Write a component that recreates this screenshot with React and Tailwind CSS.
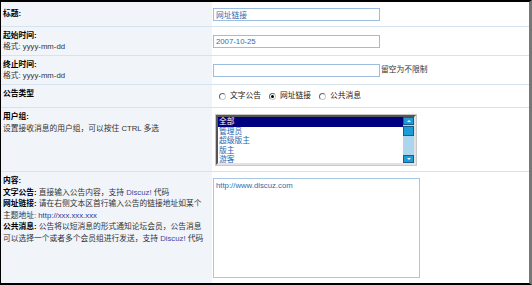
import React from 'react';

const groups = ['全部', '管理员', '超级版主', '版主', '游客'];

function Field({ value = '' }) {
  return (
    <input
      readOnly
      defaultValue={value}
      className="h-[13px] w-[167px] border border-[#9cbde0] bg-white px-[2px] text-[7.75px] leading-[11px] text-[#2e6cb4] outline-none"
    />
  );
}

function Radio({ checked, label }) {
  return (
    <span className="flex items-center">
      <span className="relative mr-[4px] h-[7px] w-[7px] rounded-full border border-t-[#666] border-l-[#666] border-r-[#c8c8c8] border-b-[#c8c8c8] bg-white">
        {checked && <span className="absolute inset-0 m-auto h-[3px] w-[3px] rounded-full bg-black" />}
      </span>
      <span className="mr-[8px]">{label}</span>
    </span>
  );
}

function ListBox() {
  return (
    <div className="flex h-[52px] w-[202px] border border-[#c9c9c9] bg-white">
      <div className="flex flex-1 border-2 border-t-[#555] border-l-[#555] border-r-[#e2e2e2] border-b-[#e2e2e2]">
        <div className="flex-1 overflow-hidden">
          {groups.map((g, i) => (
            <div
              key={g}
              className={`h-[9.6px] pl-[1px] leading-[9.6px] ${i === 0 ? 'bg-[#000080] text-white' : 'text-[#2b65ae]'}`}
            >
              {g}
            </div>
          ))}
        </div>
        {/* scrollbar */}
        <div className="flex w-[11px] flex-col bg-[#acd5ee]">
          <div className="flex h-[8px] items-center justify-center border border-[#1a5d86] bg-[#1f9bd7]">
            <span className="h-0 w-0 border-x-[2px] border-b-[2px] border-x-transparent border-b-white" />
          </div>
          <div className="mt-[1px] h-[10px] border border-[#1a5d86] bg-[#1f9bd7]" />
          <div className="flex-1" />
          <div className="flex h-[8px] items-center justify-center border border-[#1a5d86] bg-[#1f9bd7]">
            <span className="h-0 w-0 border-x-[2px] border-t-[2px] border-x-transparent border-t-white" />
          </div>
        </div>
      </div>
    </div>
  );
}

export default function App() {
  return (
    <div className="h-[285px] w-[532px] overflow-hidden bg-white font-['Liberation_Sans','Noto_Sans_CJK_SC',sans-serif] text-[7.75px] leading-[11.5px] text-black">
      <div className="flex h-full flex-col border-t-2 border-b-2 border-l border-r-[3px] border-t-black border-b-black border-l-black border-r-[#777]">
        {/* 标题 */}
        <div className="flex h-[25px] border-b border-[#d6e3ef]">
          <div className="flex w-[211px] items-center bg-[#f1f5f9] pl-[2px] font-bold">标题:</div>
          <div className="flex flex-1 items-center pl-[1px]">
            <Field value="网址链接" />
          </div>
        </div>

        {/* 起始时间 */}
        <div className="flex h-[29px] border-b border-[#d6e3ef]">
          <div className="flex w-[211px] flex-col justify-center bg-[#f1f5f9] pl-[2px]">
            <span className="font-bold">起始时间:</span>
            <span className="text-[#333]">格式: yyyy-mm-dd</span>
          </div>
          <div className="flex flex-1 items-center pl-[1px]">
            <Field value="2007-10-25" />
          </div>
        </div>

        {/* 终止时间 */}
        <div className="flex h-[29px] border-b border-[#d6e3ef]">
          <div className="flex w-[211px] flex-col justify-center bg-[#f1f5f9] pl-[2px]">
            <span className="font-bold">终止时间:</span>
            <span className="text-[#333]">格式: yyyy-mm-dd</span>
          </div>
          <div className="flex flex-1 items-center pl-[1px]">
            <Field />
            <span className="ml-[1px] text-[#333]">留空为不限制</span>
          </div>
        </div>

        {/* 公告类型 */}
        <div className="flex h-[23px] border-b border-[#d6e3ef]">
          <div className="w-[211px] bg-[#f1f5f9] pl-[2px] pt-[3px] font-bold">公告类型</div>
          <div className="flex flex-1 items-center pl-[7px] text-[#222]">
            <Radio label="文字公告" />
            <Radio label="网址链接" checked />
            <Radio label="公共消息" />
          </div>
        </div>

        {/* 用户组 */}
        <div className="flex h-[64px] border-b border-[#d6e3ef]">
          <div className="w-[211px] bg-[#f1f5f9] pl-[2px] pt-[3px]">
            <div className="font-bold">用户组:</div>
            <div className="text-[#333]">设置接收消息的用户组，可以按住 CTRL 多选</div>
          </div>
          <div className="flex-1 pl-[3px] pt-[6px]">
            <ListBox />
          </div>
        </div>

        {/* 内容 */}
        <div className="flex flex-1">
          <div className="w-[211px] bg-[#f1f5f9] pl-[2px] pt-[3px] leading-[11.6px] text-[#333]">
            <div className="font-bold text-black">内容:</div>
            <div>
              <b className="text-black">文字公告:</b> 直接输入公告内容，支持 <span className="text-[#4646a0]">Discuz!</span> 代码
            </div>
            <div>
              <b className="text-black">网址链接:</b> 请在右侧文本区首行输入公告的链接地址如某个
              <br />
              主题地址: <span className="text-[#33338c]">http://xxx.xxx.xxx</span>
            </div>
            <div>
              <b className="text-black">公共消息:</b> 公告将以短消息的形式通知论坛会员，公告消息
              <br />
              可以选择一个或者多个会员组进行发送，支持 <span className="text-[#4646a0]">Discuz!</span> 代码
            </div>
          </div>
          <div className="flex-1 pl-[1px] pt-[6px]">
            <textarea
              readOnly
              defaultValue="http://www.discuz.com"
              className="block h-[100px] w-[207px] resize-none border border-[#a9c8e6] bg-white px-[2px] py-[1px] text-[7.75px] leading-[11px] text-[#2e6cb4] outline-none"
            />
          </div>
        </div>
      </div>
    </div>
  );
}
